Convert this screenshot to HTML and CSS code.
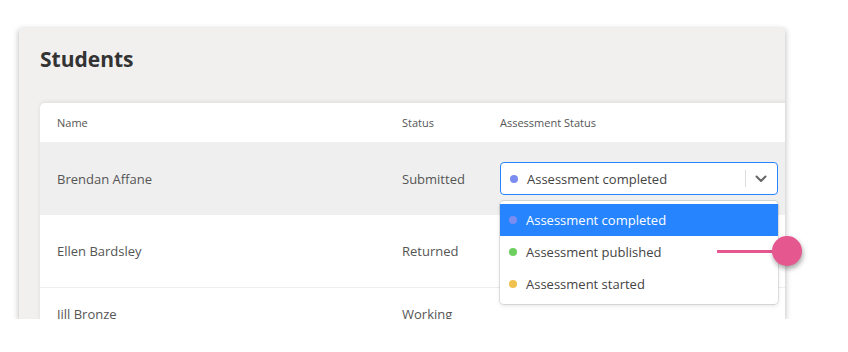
FILE: index.html
```html
<!DOCTYPE html>
<html>
  <head>
    <meta charset="utf-8">
    <title>Students</title>
    <link rel="stylesheet" href="styles.css">
  </head>
  <body>
    <section class="card">
      <h1>Students</h1>
      <div class="table">
        <div class="row head">
          <div>Name</div>
          <div>Status</div>
          <div>Assessment Status</div>
        </div>
        <div class="row active">
          <div>Brendan Affane</div>
          <div>Submitted</div>
          <div class="cell-select">
            <div class="select">
              <span class="dot blue"></span>
              <span class="select_value">Assessment completed</span>
              <span class="select_sep"></span>
              <svg class="select_arrow" width="12" height="8" viewBox="0 0 12 8">
                <path d="M1.5 1.5 L6 6 L10.5 1.5" fill="none" stroke="#666" stroke-width="2" stroke-linecap="round" stroke-linejoin="round"/>
              </svg>
            </div>
            <ul class="menu">
              <li class="menu_item selected"><span class="dot blue"></span>Assessment completed</li>
              <li class="menu_item"><span class="dot green"></span>Assessment published</li>
              <li class="menu_item"><span class="dot yellow"></span>Assessment started</li>
            </ul>
          </div>
        </div>
        <div class="row">
          <div>Ellen Bardsley</div>
          <div>Returned</div>
          <div></div>
        </div>
        <div class="row last">
          <div>Jill Bronze</div>
          <div>Working</div>
          <div></div>
        </div>
      </div>
    </section>
    <div class="pointer">
      <span class="pointer_line"></span>
      <span class="pointer_dot"></span>
    </div>
  </body>
</html>
```
FILE: styles.css
```css
* {
  margin: 0;
  padding: 0;
  box-sizing: border-box;
}

body {
  background-color: white;
  font-family: "Open Sans", "Noto Sans", sans-serif;
  color: #555;
}

.card {
  background-color: #f1f0ef;
  margin: 28px 0 0 19px;
  width: 766px;
  height: 291px;
  overflow: hidden;
  padding-left: 21px;
  box-shadow: 0 2px 6px rgba(0, 0, 0, 0.3);
}

h1 {
  font-size: 21px;
  font-weight: 700;
  color: #333;
  line-height: 30px;
  padding-top: 16px;
  height: 75px;
}

.table {
  background-color: white;
  width: 800px;
  border-radius: 5px 0 0 0;
  box-shadow: 0 -1px 4px rgba(0, 0, 0, 0.08);
}

.row {
  display: grid;
  grid-template-columns: 345px 98px 1fr;
  align-items: center;
  padding-left: 17px;
  height: 73px;
  font-size: 13px;
  border-bottom: 1px solid #eee;
}

.row.head {
  height: 39px;
  font-size: 11px;
  border-bottom: none;
}

.row.active {
  background-color: #efefef;
  border-bottom: none;
}

.row.last {
  height: 52px;
  border-bottom: none;
}

.cell-select {
  position: relative;
  width: 278px;
}

.select {
  display: flex;
  align-items: center;
  height: 33px;
  border: 1px solid #2684ff;
  border-radius: 4px;
  background-color: white;
  padding-left: 9px;
  color: #444;
}

.select_value {
  flex: 1;
}

.select_sep {
  width: 1px;
  height: 17px;
  background-color: #ddd;
}

.select_arrow {
  margin: 0 10px 0 9px;
}

.dot {
  display: inline-block;
  width: 8px;
  height: 8px;
  border-radius: 50%;
  margin-right: 9px;
}

.dot.blue {
  background-color: #7a8cf0;
}

.dot.green {
  background-color: #6ccf5f;
}

.dot.yellow {
  background-color: #f0c14f;
}

.menu {
  position: absolute;
  top: 39px;
  left: 0;
  width: 278px;
  list-style-type: none;
  background-color: white;
  border-radius: 4px;
  padding: 3px 0 4px;
  box-shadow: 0 0 0 1px rgba(0, 0, 0, 0.1), 0 2px 4px rgba(0, 0, 0, 0.1);
  z-index: 2;
}

.menu_item {
  display: flex;
  align-items: center;
  height: 32px;
  padding-left: 9px;
  color: #444;
}

.menu_item.selected {
  background-color: #2684ff;
  color: white;
}

.pointer {
  position: absolute;
  left: 717px;
  top: 236px;
  display: flex;
  align-items: center;
  z-index: 3;
}

.pointer_line {
  width: 60px;
  height: 3px;
  background-color: #e4578f;
}

.pointer_dot {
  width: 30px;
  height: 30px;
  margin-left: -5px;
  border-radius: 50%;
  background-color: #e4578f;
  box-shadow: 1px 3px 5px rgba(0, 0, 0, 0.35);
}
```
